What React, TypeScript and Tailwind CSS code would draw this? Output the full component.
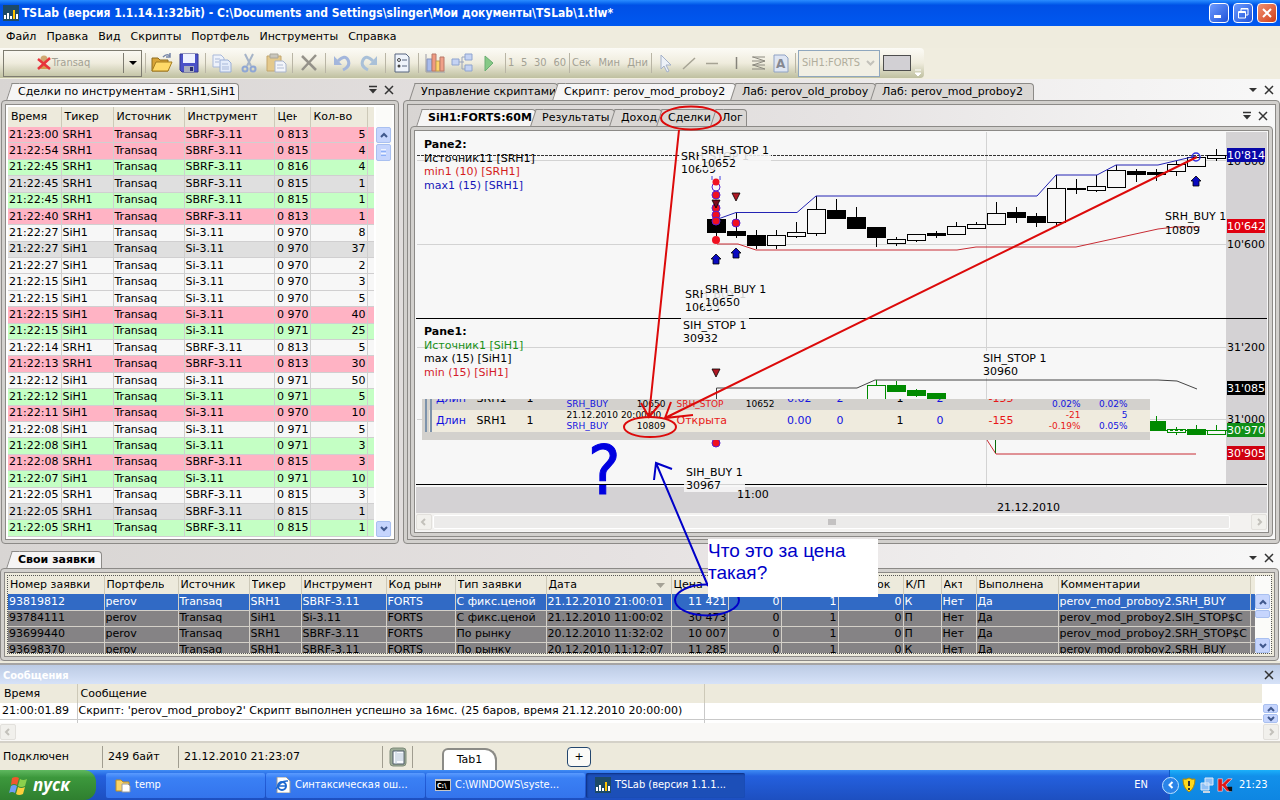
import type { ReactNode } from 'react';
import clsx from 'clsx';

type Tone = 'sell' | 'buy' | 'gray' | 'plain';

interface Deal {
  time: string;
  ticker: 'SRH1' | 'SiH1';
  price: string;
  qty: number;
  tone: Tone;
}

const deal = (time: string, ticker: Deal['ticker'], price: string, qty: number, tone: Tone): Deal => ({
  time, ticker, price, qty, tone,
});

const deals: Deal[] = [
  deal('21:23:00', 'SRH1', '0 813', 5, 'sell'),
  deal('21:22:54', 'SRH1', '0 815', 4, 'sell'),
  deal('21:22:45', 'SRH1', '0 816', 4, 'buy'),
  deal('21:22:45', 'SRH1', '0 815', 1, 'gray'),
  deal('21:22:45', 'SRH1', '0 815', 1, 'buy'),
  deal('21:22:40', 'SRH1', '0 813', 1, 'sell'),
  deal('21:22:27', 'SiH1', '0 970', 8, 'plain'),
  deal('21:22:27', 'SiH1', '0 970', 37, 'gray'),
  deal('21:22:27', 'SiH1', '0 970', 2, 'plain'),
  deal('21:22:15', 'SiH1', '0 970', 3, 'plain'),
  deal('21:22:15', 'SiH1', '0 970', 5, 'plain'),
  deal('21:22:15', 'SiH1', '0 970', 40, 'sell'),
  deal('21:22:15', 'SiH1', '0 971', 25, 'buy'),
  deal('21:22:14', 'SRH1', '0 813', 5, 'plain'),
  deal('21:22:13', 'SRH1', '0 813', 30, 'sell'),
  deal('21:22:12', 'SiH1', '0 971', 50, 'plain'),
  deal('21:22:12', 'SiH1', '0 971', 5, 'buy'),
  deal('21:22:11', 'SiH1', '0 970', 10, 'sell'),
  deal('21:22:08', 'SiH1', '0 971', 5, 'plain'),
  deal('21:22:08', 'SiH1', '0 971', 3, 'buy'),
  deal('21:22:08', 'SRH1', '0 815', 3, 'sell'),
  deal('21:22:07', 'SiH1', '0 971', 10, 'buy'),
  deal('21:22:05', 'SRH1', '0 815', 3, 'plain'),
  deal('21:22:05', 'SRH1', '0 815', 1, 'gray'),
  deal('21:22:05', 'SRH1', '0 815', 1, 'buy'),
];

const toneClass: Record<Tone, string> = {
  sell: 'bg-[#ffb3c4]',
  buy: 'bg-[#c4ffc4]',
  gray: 'bg-[#dfdfdf]',
  plain: 'bg-[#f7f7f7]',
};

const orders = [
  ['93819812', 'perov', 'Transaq', 'SRH1', 'SBRF-3.11', 'FORTS', 'С фикс.ценой', '21.12.2010 21:00:01', '11 421', '0', '1', '0', 'К', 'Нет', 'Да', 'perov_mod_proboy2.SRH_BUY'],
  ['93784111', 'perov', 'Transaq', 'SiH1', 'Si-3.11', 'FORTS', 'С фикс.ценой', '21.12.2010 11:00:02', '30 473', '0', '1', '0', 'П', 'Нет', 'Да', 'perov_mod_proboy2.SIH_STOP$C'],
  ['93699440', 'perov', 'Transaq', 'SRH1', 'SBRF-3.11', 'FORTS', 'По рынку', '20.12.2010 11:32:02', '10 007', '0', '1', '0', 'П', 'Нет', 'Да', 'perov_mod_proboy2.SRH_STOP$C'],
  ['93698370', 'perov', 'Transaq', 'SRH1', 'SBRF-3.11', 'FORTS', 'По рынку', '20.12.2010 11:12:07', '11 285', '0', '1', '0', 'К', 'Нет', 'Да', 'perov_mod_proboy2.SRH_BUY'],
];

const orderColumns = [
  { title: 'Номер заявки', width: 'w-[96px]' },
  { title: 'Портфель', width: 'w-[74px]' },
  { title: 'Источник', width: 'w-[71px]' },
  { title: 'Тикер', width: 'w-[52px]' },
  { title: 'Инструмент', width: 'w-[85px]' },
  { title: 'Код рынка', width: 'w-[69px]' },
  { title: 'Тип заявки', width: 'w-[91px]' },
  { title: 'Дата', width: 'w-[125px]' },
  { title: 'Цена', width: 'w-[57px]' },
  { title: '', width: 'w-[53px]' },
  { title: '', width: 'w-[57px]' },
  { title: 'Остаток', width: 'w-[65px]' },
  { title: 'К/П', width: 'w-[38px]' },
  { title: 'Акт', width: 'w-[35px]' },
  { title: 'Выполнена', width: 'w-[82px]' },
  { title: 'Комментарии', width: '' },
];

// y values of one bar: body top, body bottom, high, low
interface Candle {
  x: number;
  top: number;
  bottom: number;
  high: number;
  low: number;
  filled: boolean;
}

const bar = (x: number, top: number, bottom: number, high: number, low: number, filled = false): Candle => ({
  x, top, bottom, high, low, filled,
});

const sberCandles: Candle[] = [
  bar(716, 219, 232, 219, 236, true),
  bar(736, 231, 235, 213, 238, true),
  bar(756, 235, 245, 230, 249, true),
  bar(776, 235, 245, 230, 249),
  bar(796, 232, 236, 222, 238),
  bar(816, 209, 233, 196, 236),
  bar(836, 210, 218, 199, 219, true),
  bar(856, 217, 228, 207, 229, true),
  bar(876, 227, 237, 227, 247, true),
  bar(896, 239, 243, 237, 246),
  bar(916, 234, 240, 234, 242),
  bar(936, 233, 235, 231, 238, true),
  bar(956, 226, 234, 222, 234),
  bar(976, 224, 228, 222, 229),
  bar(996, 213, 224, 202, 224),
  bar(1016, 212, 217, 207, 223, true),
  bar(1036, 216, 222, 213, 227, true),
  bar(1056, 188, 222, 175, 226),
  bar(1076, 188, 189, 179, 194, true),
  bar(1096, 186, 190, 175, 192),
  bar(1116, 170, 187, 165, 188),
  bar(1136, 171, 174, 169, 182, true),
  bar(1156, 172, 174, 169, 181, true),
  bar(1176, 164, 171, 161, 176),
  bar(1196, 157, 166, 157, 166),
  bar(1216, 155, 158, 149, 161),
];

const siCandles: Candle[] = [
  bar(876, 385, 402, 380, 402),
  bar(896, 385, 391, 381, 391, true),
  bar(916, 390, 395, 389, 397, true),
  bar(936, 393, 399, 393, 399, true),
  bar(1156, 421, 430, 416, 430, true),
  bar(1176, 429, 432, 427, 435),
  bar(1196, 429, 434, 425, 435, true),
  bar(1216, 430, 434, 425, 434),
];

function CaretDown({ bar: withBar = false }: { bar?: boolean }) {
  return (
    <svg width="10" height="10" viewBox="0 0 10 10" aria-hidden>
      {withBar && <path d="M1 1.5h8" stroke="#333" strokeWidth="1.5" />}
      <path d={withBar ? 'M1 4h8L5 8.500z' : 'M1 3h8L5 7z'} fill="#333" />
    </svg>
  );
}

function CloseMark() {
  return (
    <svg width="10" height="10" viewBox="0 0 10 10" aria-hidden>
      <path d="M1 1l8 8M9 1l-8 8" stroke="#333" strokeWidth="1.500" />
    </svg>
  );
}

function PanelButtons({ pin = false }: { pin?: boolean }) {
  return (
    <div className="ml-auto flex items-center gap-[6px] self-center">
      <button aria-label="Меню панели"><CaretDown bar={pin} /></button>
      <button aria-label="Закрыть панель"><CloseMark /></button>
    </div>
  );
}

interface TabProps {
  children: ReactNode;
  width: string;
  active?: boolean;
  bold?: boolean;
}

function Tab({ children, width, active, bold }: TabProps) {
  return (
    <button
      className={clsx(
        'relative h-[17px] rounded-tr-sm border-t border-r border-[#8c8a87] pl-[6px] text-left whitespace-nowrap',
        'before:absolute before:-top-px before:bottom-0 before:-left-[3px] before:w-2 before:-skew-x-[18deg] before:border-t before:border-l before:border-[#8c8a87]',
        active ? 'bg-[#f6f5f5] before:bg-[#f6f5f5]' : 'bg-[#dad7d4] before:bg-[#dad7d4]',
        bold && 'font-bold',
        width,
      )}
    >
      <span className="relative">{children}</span>
    </button>
  );
}

function Frame({ children, className }: { children: ReactNode; className?: string }) {
  return (
    <div className="flex min-h-0 flex-1 flex-col rounded-sm border border-[#8c8a87] bg-[#d2d0cd] p-[3px]">
      <div className={clsx('flex min-h-0 flex-1 flex-col border border-[#8c8a87]', className)}>{children}</div>
    </div>
  );
}

function ScrollArrow({ dir, className, muted }: { dir: 'up' | 'down' | 'left' | 'right'; className: string; muted?: boolean }) {
  const paths = { up: 'M1 6l3-3 3 3', down: 'M1 2l3 3 3-3', left: 'M5 1L2 4l3 3', right: 'M3 1l3 3-3 3' };
  return (
    <button
      aria-label={dir}
      className={clsx(
        'flex shrink-0 items-center justify-center rounded-xs border',
        muted ? 'border-[#e2e0dc] bg-[#f1f0ec]' : 'border-[#a9c0f0] bg-[#c6d5fd]',
        className,
      )}
    >
      <svg width="8" height="8" viewBox="0 0 8 8" aria-hidden>
        <path d={paths[dir]} fill="none" stroke={muted ? '#c3c1bb' : '#40588c'} strokeWidth="2" />
      </svg>
    </button>
  );
}

function TitleBar() {
  return (
    <header className="flex h-[26px] items-center bg-linear-to-b from-[#2a8cff] via-[#0050e6] via-20% to-[#0058f0] px-[3px]">
      <AppIcon />
      <h1 className="ml-[3px] flex-1 font-['DejaVu_Sans_Condensed','DejaVu_Sans',sans-serif] text-[12px] font-bold whitespace-nowrap text-white">
        TSLab (версия 1.1.14.1:32bit) - C:\Documents and Settings\slinger\Мои документы\TSLab\1.tlw*
      </h1>
      <div className="flex gap-1">
        <button aria-label="Свернуть" className="flex size-5 items-end rounded-sm border border-white bg-linear-to-br from-[#6e9bff] to-[#1f50d8] p-1">
          <span className="h-[3px] w-[7px] bg-white" />
        </button>
        <button aria-label="Восстановить" className="flex size-5 items-center justify-center rounded-sm border border-white bg-linear-to-br from-[#6e9bff] to-[#1f50d8]">
          <svg width="12" height="12" viewBox="0 0 12 12" fill="none" stroke="#fff" aria-hidden>
            <path d="M4 4V1.500h7V8H8.500M4 2h7" />
            <path d="M1.500 4.500h7v6.500h-7zM1 5.500h8" />
          </svg>
        </button>
        <button aria-label="Закрыть" className="flex size-5 items-center justify-center rounded-sm border border-white bg-linear-to-br from-[#f09070] to-[#d03c10]">
          <svg width="12" height="12" viewBox="0 0 12 12" aria-hidden>
            <path d="M2 2l8 8M10 2l-8 8" stroke="#fff" strokeWidth="2" />
          </svg>
        </button>
      </div>
    </header>
  );
}

function AppIcon() {
  return (
    <svg width="16" height="16" viewBox="0 0 16 16" aria-hidden>
      <path fill="#1d4a66" d="M0 0h16v16H0z" />
      <path fill="#fff" d="M1 10h2v4H1zM4 8h2v6H4zM7 11h2v3H7zM13 9h2v5h-2z" />
      <path fill="#ffc400" d="M10 5h2v9h-2z" />
    </svg>
  );
}

const menu = ['Файл', 'Правка', 'Вид', 'Скрипты', 'Портфель', 'Инструменты', 'Справка'];

function Tool({ label, children, narrow }: { label: string; children: ReactNode; narrow?: boolean }) {
  return (
    <button
      aria-label={label}
      className={clsx('flex h-[27px] shrink-0 items-center justify-center', narrow ? 'w-[23px]' : 'w-[27px]')}
    >
      <svg width="22" height="22" viewBox="0 0 22 22" fill="none" aria-hidden>{children}</svg>
    </button>
  );
}

function Sep() {
  return <span className="mr-[2px] ml-[3px] h-5 w-px shrink-0 bg-[#b9b5a5]" />;
}

function Toolbar() {
  return (
    <div className="flex h-[31px] items-start bg-[#f0eddf]">
      <div className="flex h-[30px] items-center rounded-r-sm bg-linear-to-b from-[#fcfbf6] via-[#efecdd] to-[#bfc0a0] pl-[3px] text-[11px] text-[#a3a194]">
        <div className="flex h-[27px] w-[139px] shrink-0 items-center border border-[#7e7c70]">
          <button className="flex h-5 w-[120px] items-center justify-center gap-px border-r border-[#7e7c70] font-['DejaVu_Sans_Condensed','DejaVu_Sans',sans-serif]">
            <svg width="14" height="16" viewBox="0 0 14 16" aria-hidden>
              <circle cx="7" cy="4" r="3.500" fill="#d0a870" />
              <path d="M3 14q4-9 8 0z" fill="#d69a50" />
              <path d="M1 4l12 10M13 3L1 14" stroke="#e8343c" strokeWidth="2.500" />
            </svg>
            Transaq
          </button>
          <button aria-label="Выбор источника" className="flex flex-1 justify-center">
            <svg width="10" height="6" viewBox="0 0 10 6" aria-hidden><path d="M1 1h8L5 5z" fill="#000" /></svg>
          </button>
        </div>
        <Sep />
        <Tool label="Открыть">
          <path d="M1 6h6l2 2h8v11H1z" fill="#d9a437" stroke="#8f6d1e" />
          <path d="M1 19L5 10h16l-4 9z" fill="#ffd968" stroke="#a47c1f" />
          <path d="M12 5q4-4 7-1m0-3v4h-4" stroke="#7585a8" strokeWidth="1.500" />
        </Tool>
        <Tool label="Сохранить">
          <path d="M2 2h18v18H4l-2-2z" fill="#4a50c8" stroke="#33388f" />
          <path d="M5 2h12v9H5z" fill="#eef1ff" />
          <path d="M6 14h10v6H6z" fill="#a9adbc" />
          <path d="M12 15h3v4h-3z" fill="#282c70" />
        </Tool>
        <Sep />
        <Tool label="Копировать">
          <path d="M2 3h8l3 3v9H2z" fill="#eef2fa" stroke="#a9b9da" />
          <path d="M9 8h8l3 3v9H9z" fill="#e4ecfa" stroke="#9aaed6" />
          <path d="M4 7h5M4 10h4M11 12h6M11 15h7M11 17h7" stroke="#a9b9da" />
        </Tool>
        <Tool label="Вырезать">
          <path d="M7 2l6 12M15 2L9 14" stroke="#a6b4c8" strokeWidth="2" />
          <circle cx="7" cy="17" r="2.500" stroke="#8ea6d4" strokeWidth="2" />
          <circle cx="15" cy="17" r="2.500" stroke="#8ea6d4" strokeWidth="2" />
        </Tool>
        <Tool label="Вставить">
          <path d="M2 4h14v15H2z" fill="#e4c98c" stroke="#c3a66c" />
          <path d="M5 2h8v4H5z" fill="#c9c6bc" stroke="#aaa79a" />
          <path d="M10 9h8l3 3v8H10z" fill="#f3f5fa" stroke="#a9b4cc" />
          <path d="M12 13h6M12 16h7" stroke="#b4bfd6" />
        </Tool>
        <Sep />
        <Tool label="Удалить">
          <path d="M4 4l14 14M18 3L4 18" stroke="#95928a" strokeWidth="2.500" />
        </Tool>
        <Sep />
        <Tool label="Отменить">
          <path d="M7 9q7-7 10-1t-5 10" stroke="#a3b6dc" strokeWidth="3" />
          <path d="M3 4v9h8z" fill="#a3b6dc" />
        </Tool>
        <Tool label="Повторить">
          <path d="M15 9q-7-7-10-1t5 10" stroke="#a9c0d8" strokeWidth="3" />
          <path d="M19 4v9h-8z" fill="#a9c0d8" />
        </Tool>
        <Sep />
        <Tool label="Свойства">
          <path d="M4 2h11l3 3v15H4z" fill="#eef3fa" stroke="#56657f" />
          <circle cx="8" cy="8" r="1.500" stroke="#444" />
          <circle cx="8" cy="14" r="1.500" fill="#444" />
          <path d="M11 8h5M11 14h5" stroke="#56657f" />
        </Tool>
        <Sep />
        <Tool label="График">
          <path d="M2 2v18h19" stroke="#9a9aa5" />
          <path d="M3 7h5v12H3z" fill="#a9bcec" stroke="#8391bb" />
          <path d="M8 2h4v17H8z" fill="#f09a80" stroke="#b77868" />
          <path d="M12 9h4v10h-4z" fill="#ffd46a" stroke="#c2a050" />
          <path d="M16 5h4v14h-4z" fill="#f0a088" stroke="#b77868" />
        </Tool>
        <Tool label="Схема">
          <path d="M8 10h5M11 5v12M11 5h3M11 17h3" stroke="#98a3bb" />
          <path d="M1 7h7v6H1zM14 2h7v6h-7zM14 13h7v6h-7z" fill="#c5d3f3" stroke="#8fa4cf" />
        </Tool>
        <Tool label="Запуск">
          <path d="M7 4l8 7-8 8z" fill="#86c986" stroke="#6aae72" />
        </Tool>
        <Sep />
        <div className="flex w-[58px] shrink-0 justify-between font-['DejaVu_Sans_Condensed','DejaVu_Sans',sans-serif]">
          <button>1</button>
          <button>5</button>
          <button>30</button>
          <button>60</button>
        </div>
        <Sep />
        <div className="flex w-[76px] shrink-0 justify-between font-['DejaVu_Sans_Condensed','DejaVu_Sans',sans-serif]">
          <button>Сек</button>
          <button>Мин</button>
          <button>Дни</button>
        </div>
        <Sep />
        <Tool label="Указатель" narrow>
          <path d="M6 3v14l3-3 3 6 2-1-3-6h5z" fill="#edf1f7" stroke="#a4b1c9" />
        </Tool>
        <Tool label="Линия" narrow><path d="M5 17L17 6" stroke="#a6a394" strokeWidth="1.500" /></Tool>
        <Tool label="Горизонталь" narrow><path d="M5 11.500h12" stroke="#a6a394" strokeWidth="1.500" /></Tool>
        <Tool label="Вертикаль" narrow><path d="M12.500 5v12" stroke="#85837a" strokeWidth="1.500" /></Tool>
        <Tool label="Уровни" narrow>
          <path d="M5 5h13M5 9h13M5 13h13M5 17h13M6 5l12 4-12 4 12 4" stroke="#8c8a80" />
        </Tool>
        <Tool label="Текст" narrow>
          <path d="M4 3h11l3 3v14H4z" fill="#dee5f2" stroke="#8fa2c4" />
          <text x="6" y="16" fontSize="12" fontWeight="bold" fill="#858891">A</text>
        </Tool>
        <Sep />
        <button className="flex h-[27px] w-[82px] shrink-0 items-center justify-between border border-[#8fa7be] bg-[#f1efe4] pr-1 pl-[3px] font-['DejaVu_Sans_Condensed','DejaVu_Sans',sans-serif] whitespace-nowrap text-[#b0ad9c]">
          SiH1:FORTS
          <svg width="9" height="6" viewBox="0 0 9 6" fill="none" aria-hidden><path d="M1 1l3.500 3.500L8 1" stroke="#c3c2ba" strokeWidth="2" /></svg>
        </button>
        <button aria-label="Цвет" className="mx-[3px] h-4 w-7 border border-[#4e4e4e] bg-[#d2d0d4]" />
        <span className="w-[10px] self-end pb-px">
          <svg width="8" height="8" viewBox="0 0 8 8" aria-hidden><path d="M1 1h6M1 4h6L4 7z" fill="#fff" stroke="#fff" /></svg>
        </span>
      </div>
    </div>
  );
}

function DealsPanel() {
  return (
    <section className="ml-px flex w-[398px] shrink-0 flex-col">
      <div className="flex h-[21px] items-end pr-[5px] pl-[11px]">
        <Tab width="w-[227px]" active>Сделки по инструментам - SRH1,SiH1</Tab>
        <PanelButtons pin />
      </div>
      <Frame className="bg-white p-[2px]">
        <div className="flex flex-1">
          <table className="h-full w-[366px] table-fixed border-collapse">
            <thead>
              <tr className="h-5 bg-[#edeadc] text-left">
                <th className="w-[53px] pl-[3px] font-normal">Время</th>
                <th className="w-[52px] border-l border-[#cdc9b8] pl-[3px] font-normal">Тикер</th>
                <th className="w-[71px] border-l border-[#cdc9b8] pl-[3px] font-normal">Источник</th>
                <th className="w-[90px] border-l border-[#cdc9b8] pl-[3px] font-normal">Инструмент</th>
                <th className="w-[36px] overflow-hidden border-x border-[#cdc9b8] pl-[3px] font-normal"><span className="block w-[19px] overflow-hidden">Цена</span></th>
                <th className="w-[57px] border-r border-[#cdc9b8] pl-[3px] font-normal">Кол-во</th>
                <th aria-label="Пусто" />
              </tr>
            </thead>
            <tbody>
              {deals.map((row, i) => (
                <tr key={i} className={clsx('border-b border-[#d0cfd0] whitespace-nowrap', toneClass[row.tone])}>
                  <td className="overflow-hidden pl-px">{row.time}</td>
                  <td className="border-l border-[#cfcfcf] pl-px">{row.ticker}</td>
                  <td className="border-l border-[#cfcfcf] pl-px">Transaq</td>
                  <td className="border-l border-[#cfcfcf] pl-px">{row.ticker === 'SRH1' ? 'SBRF-3.11' : 'Si-3.11'}</td>
                  <td className="border-l border-[#cfcfcf] pr-px text-right">{row.price}</td>
                  <td className="border-x border-[#cfcfcf] pr-px text-right">{row.qty}</td>
                  <td />
                </tr>
              ))}
            </tbody>
          </table>
          <div className="ml-[2px] flex flex-1 flex-col bg-[#fbfbf9] pt-5">
            <ScrollArrow dir="up" className="h-4 w-[15px]" />
            <div className="mt-px flex h-[17px] w-[15px] flex-col justify-center gap-px rounded-xs border border-[#a9c0f0] bg-[#c6d5fd] px-1">
              <span className="h-px bg-[#eef4fe]" />
              <span className="h-px bg-[#8cb0f8]" />
              <span className="h-px bg-[#eef4fe]" />
              <span className="h-px bg-[#8cb0f8]" />
            </div>
            <ScrollArrow dir="down" className="mt-auto h-4 w-[15px]" />
          </div>
        </div>
      </Frame>
    </section>
  );
}

function Candles({ data, color }: { data: Candle[]; color: string }) {
  return (
    <g stroke={color}>
      {data.map(c => (
        <g key={c.x}>
          <path d={`M${c.x} ${c.high}V${c.low}`} />
          <rect x={c.x - 9} y={c.top} width={18} height={c.bottom - c.top} fill={c.filled ? color : '#f7f7f7'} />
        </g>
      ))}
    </g>
  );
}

interface MarkProps {
  x: number;
  y: number;
  name: string;
  price: string;
  w?: number;
}

function TradeLabel({ x, y, name, price, w = 68 }: MarkProps) {
  return (
    <g>
      <rect x={x - 2} y={y - 11} width={w} height={27} fill="#f7f7f7" fillOpacity={0.85} />
      <text x={x} y={y}>{name}</text>
      <text x={x} y={y + 13}>{price}</text>
    </g>
  );
}

function PriceTag({ y, value, fill }: { y: number; value: string; fill: string }) {
  return (
    <g>
      <rect x={1227} y={y - 7} width={38} height={14} fill={fill} />
      <text x={1227} y={y + 4} fill="#fff">{value}</text>
    </g>
  );
}

const upArrow = (x: number, y: number) => `M${x} ${y - 5}l5 5h-2v5h-6v-5h-2z`;
const downArrow = (x: number, y: number) => `M${x - 4} ${y - 4}h8l-4 8z`;

function Chart() {
  return (
    <svg viewBox="416 132 851 381" className="block h-auto w-full text-[11px]" shapeRendering="crispEdges">
      <rect x="416" y="132" width="851" height="381" fill="#f7f7f7" />
      <rect x="1226" y="132" width="41" height="353" fill="#d4d2d4" />
      <rect x="416" y="487" width="851" height="26" fill="#d4d2d4" />
      <path d="M417 160.500h810M417 244.500h810M417 347.500h810M417 419.500h810M986.500 132v355" stroke="#d3d3d3" />
      <path d="M417 155.500h810" stroke="#333" strokeDasharray="3 1" />
      <path d="M416 318.500h851M416 484.500h851" stroke="#000" />

      <g fontWeight="bold">
        <text x="424" y="148">Pane2:</text>
        <text x="424" y="335">Pane1:</text>
      </g>
      <text x="424" y="162">Источник11 [SRH1]</text>
      <text x="424" y="175" fill="#d41c1c">min1 (10) [SRH1]</text>
      <text x="424" y="189" fill="#1616b8">max1 (15) [SRH1]</text>
      <text x="424" y="349" fill="#189018">Источник1 [SiH1]</text>
      <text x="424" y="362">max (15) [SiH1]</text>
      <text x="424" y="376" fill="#d41c2c">min (15) [SiH1]</text>

      <Candles data={sberCandles} color="#000" />
      <g fill="none" shapeRendering="auto">
        <path d="M718 219l18-6.500h61l19-16.500h221l19-21h41l19-10h42l38-9" stroke="#2424b4" />
        <path d="M717 244h21l18 6h201l19-3h100l82-18 17-2h25" stroke="#c82c34" />
        <path d="M716.500 400v-12H857l18-8h283l19 1 20 8" stroke="#444" />
        <path d="M987 440l9 14h200" stroke="#c82c34" />
        <path d="M995.500 438v15" stroke="#0a6a0a" />
      </g>
      <Candles data={siCandles} color="#008a00" />
      <path d="M1150 430.500h77" stroke="#008a00" strokeDasharray="3 2" />

      <TradeLabel x={681} y={160} name="SRH_STOP 1" price="10609" />
      <TradeLabel x={701} y={154} name="SRH_STOP 1" price="10652" w={72} />
      <TradeLabel x={685} y={298} name="SRH_BUY 1" price="10653" />
      <TradeLabel x={705} y={293} name="SRH_BUY 1" price="10650" />
      <TradeLabel x={683} y={329} name="SIH_STOP 1" price="30932" />
      <TradeLabel x={686} y={476} name="SIH_BUY 1" price="30967" w={61} />
      <TradeLabel x={983} y={362} name="SIH_STOP 1" price="30960" />
      <text x="1165" y="220">SRH_BUY 1</text>
      <text x="1165" y="234">10809</text>

      <g shapeRendering="auto">
        <path d="M712 176v4M720 176v4" stroke="#4040e0" />
        <g fill="#f01020" stroke="#5a20d0">
          <circle cx="716" cy="187" r="4" fill="#f7f7f7" />
          <circle cx="716" cy="182" r="3.500" stroke="none" />
          <circle cx="716" cy="195" r="4" />
          <circle cx="716" cy="208" r="4" />
          <circle cx="716" cy="215" r="4" />
          <circle cx="716" cy="221" r="4" />
          <circle cx="736" cy="223" r="4" />
          <circle cx="716" cy="443" r="4" />
          <circle cx="716" cy="240" r="4" stroke="none" />
          <circle cx="1196" cy="157" r="4" fill="none" stroke="#3030e0" strokeWidth="1.500" />
        </g>
        <g stroke="#000" strokeWidth="0.800">
          <path d={downArrow(716, 204)} fill="#7c0c20" />
          <path d={downArrow(736, 197)} fill="#b01824" />
          <path d={downArrow(716, 373)} fill="#b01824" />
          <path d={upArrow(716, 259)} fill="#0a0ac0" />
          <path d={upArrow(736, 253)} fill="#0a0ac0" />
          <path d={upArrow(1196, 181)} fill="#0a0ac0" />
        </g>
      </g>

      <text x="1227" y="165">10'800</text>
      <text x="1227" y="248">10'600</text>
      <text x="1227" y="351">31'200</text>
      <text x="1227" y="423">31'000</text>
      <PriceTag y={155} value="10'814" fill="#0808a8" />
      <PriceTag y={226} value="10'642" fill="#e00010" />
      <PriceTag y={388} value="31'085" fill="#000" />
      <PriceTag y={430} value="30'970" fill="#109018" />
      <PriceTag y={453} value="30'905" fill="#d00010" />
      <text x="737" y="498">11:00</text>
      <text x="997" y="511">21.12.2010</text>
    </svg>
  );
}

interface TradeRow {
  date: string;
  entry: string;
  exit: ReactNode;
  exitPrice: string;
  cells: string[];
  profit: [string, string];
  profitPct: [string, string];
}

const tradeRows: TradeRow[] = [
  { date: '', entry: '10650', exit: <span className="text-[9px]">SRH_STOP</span>, exitPrice: '10652', cells: ['0.02', '2', '1', '2', '-155'], profit: ['', '0.02%'], profitPct: ['', '0.02%'] },
  { date: '21.12.2010 20:00:00', entry: '10809', exit: 'Открыта', exitPrice: '', cells: ['0.00', '0', '1', '0', '-155'], profit: ['-21', '-0.19%'], profitPct: ['5', '0.05%'] },
];

// fragment of the trade list, floating over the chart
function TradeStrip() {
  return (
    <div className="absolute top-[267px] left-[6px] flex h-[41px] w-[728px] flex-col justify-end overflow-hidden bg-[#d3d1cd] pb-2">
      <table className="ml-[3px] w-[725px] shrink-0 table-fixed border-collapse border-l-[7px] border-double border-[#7d93ab] whitespace-nowrap text-[#1212e0]">
        <tbody>
          {tradeRows.map((row, i) => (
            <tr key={i} className={clsx('h-[22px]', i === 0 ? 'bg-[#d3d1cd]' : 'bg-[#efebde]')}>
              <td className="w-[48px] pl-1">Длин</td>
              <td className="w-[50px] text-black">SRH1</td>
              <td className="w-[40px] text-black">1</td>
              <td className="w-[99px] text-[9px] leading-[11px]">
                <div className="h-[11px] text-black">{row.date}</div>
                <div className="flex justify-between">
                  <span>SRH_BUY</span>
                  <span className="text-black">{row.entry}</span>
                </div>
              </td>
              <td className={clsx('w-[60px] pl-[11px] text-[#e81818]', i === 0 && 'align-bottom leading-[11px]')}>{row.exit}</td>
              <td className="w-[49px] text-right align-bottom text-[9px] leading-[11px] text-black">{row.exitPrice}</td>
              <td className="w-[37px] text-right">{row.cells[0]}</td>
              <td className="w-[32px] text-right">{row.cells[1]}</td>
              <td className="w-[60px] text-right text-black">{row.cells[2]}</td>
              <td className="w-[40px] text-right">{row.cells[3]}</td>
              <td className="w-[70px] text-right text-[#e81818]">{row.cells[4]}</td>
              <td className={clsx('w-[67px] text-right text-[9px] leading-[11px]', i === 1 && 'text-[#e81818]')}>
                <div className="h-[11px]">{row.profit[0]}</div>
                <div>{row.profit[1]}</div>
              </td>
              <td className="w-[47px] text-right text-[9px] leading-[11px]">
                <div className="h-[11px]">{row.profitPct[0]}</div>
                <div>{row.profitPct[1]}</div>
              </td>
              <td />
            </tr>
          ))}
        </tbody>
      </table>
    </div>
  );
}

function ScriptPanel() {
  return (
    <section className="ml-1 flex min-w-0 flex-1 flex-col">
      <div className="flex h-[21px] items-end pr-[6px] pl-[12px]">
        <Tab width="w-[143px]">Управление скриптами</Tab>
        <Tab width="w-[178px]" active>Скрипт: perov_mod_proboy2</Tab>
        <Tab width="w-[140px]">Лаб: perov_old_proboy</Tab>
        <Tab width="w-[158px]">Лаб: perov_mod_proboy2</Tab>
        <PanelButtons />
      </div>
      <Frame className="bg-linear-to-r from-[#d8d5d3] via-[#e6e3e3] to-[#f8f8f8] p-[2px] pt-0">
        <div className="flex h-[21px] items-end pr-[5px] pl-[12px]">
          <Tab width="w-[114px]" active bold>SiH1:FORTS:60M</Tab>
          <Tab width="w-[79px]">Результаты</Tab>
          <Tab width="w-[47px]">Доход</Tab>
          <Tab width="w-[54px]">Сделки</Tab>
          <Tab width="w-[31px]">Лог</Tab>
          <PanelButtons pin />
        </div>
        <Frame className="bg-[#f7f7f7] p-px">
          <div className="relative">
            <Chart />
            <TradeStrip />
          </div>
          <div className="flex flex-1 items-center bg-[#f3f2f0]">
            <ScrollArrow dir="left" muted className="h-4 w-4" />
            <div className="mx-px flex h-[14px] flex-1 items-center justify-center rounded-xs border border-white bg-[#ecebea]">
              <span className="h-[6px] w-2 bg-[#c4c2c2]" />
            </div>
            <ScrollArrow dir="right" muted className="ml-5 h-4 w-4" />
          </div>
        </Frame>
      </Frame>
    </section>
  );
}

function OrdersPanel() {
  return (
    <section className="flex h-[114px] flex-col pr-px">
      <div className="flex h-[21px] items-end pr-[5px] pl-[12px]">
        <Tab width="w-[90px]" active bold>Свои заявки</Tab>
        <PanelButtons />
      </div>
      <Frame className="bg-[#edeadc] p-[2px]">
        <div className="flex min-h-0 flex-1 border border-dotted border-[#555]">
          <div className="min-w-0 flex-1 overflow-hidden">
            <table className="w-full table-fixed border-collapse whitespace-nowrap">
              <thead>
                <tr className="h-[18px] bg-[#edeadc] text-left">
                  {orderColumns.map((col, i) => (
                    <th key={i} className={clsx('overflow-hidden border-r border-[#cdc9b8] pl-[2px] font-normal', col.width)}>
                      {i === 7 ? (
                        <span className="flex items-center justify-between pr-[6px]">
                          {col.title}
                          <svg width="9" height="5" viewBox="0 0 9 5" aria-hidden><path d="M0 0h9L4.500 5z" fill="#a5a296" /></svg>
                        </span>
                      ) : (
                        <span className={clsx('block overflow-hidden', i === 11 ? 'pr-3 text-right' : 'mr-[14px]')}>{col.title}</span>
                      )}
                    </th>
                  ))}
                  <th className="w-[5px]" aria-label="Пусто" />
                </tr>
              </thead>
              <tbody>
                {orders.map((row, r) => (
                  <tr
                    key={row[0]}
                    className={clsx('h-4 border-b border-[#d4d0c8]', r === 0 ? 'bg-[#316ac5] text-white' : 'bg-[#858385] text-black')}
                  >
                    {row.map((value, i) => (
                      <td
                        key={i}
                        className={clsx('overflow-hidden border-r border-[#d4d0c8]', i >= 8 && i <= 11 ? 'pr-px text-right' : 'pl-px')}
                      >
                        {value}
                      </td>
                    ))}
                    <td />
                  </tr>
                ))}
              </tbody>
            </table>
          </div>
          <div className="flex w-4 flex-col bg-[#fbfbf9] pt-[18px]">
            <ScrollArrow dir="up" className="h-[15px] w-[15px]" />
            <div className="mt-px h-2 w-[15px] rounded-xs border border-[#a9c0f0] bg-[#c6d5fd]" />
            <ScrollArrow dir="down" className="mt-auto h-[15px] w-[15px]" />
          </div>
        </div>
      </Frame>
    </section>
  );
}

function MessagesPanel() {
  return (
    <section className="mt-[2px] flex h-[80px] flex-col border-y-2 border-t-[#a5a4a4] border-b-[#d4d1c8] bg-white">
      <div className="flex h-[19px] shrink-0 items-center bg-linear-to-b from-[#bccbe4] to-[#d6e2f8] pr-[6px] pl-[3px] font-['DejaVu_Sans_Condensed','DejaVu_Sans',sans-serif] font-bold text-white">
        <span className="pt-[2px]">Сообщения</span>
        <button aria-label="Закрыть сообщения" className="ml-auto"><CloseMark /></button>
      </div>
      <div className="flex h-[39px] shrink-0 items-start overflow-hidden">
        <table className="flex-1 table-fixed border-collapse whitespace-nowrap">
          <thead>
            <tr className="h-[19px] bg-[#edeadc] text-left">
              <th className="w-[77px] border-r border-[#cdc9b8] pl-[4px] font-normal">Время</th>
              <th className="w-[627px] border-r border-[#cdc9b8] pl-[3px] font-normal">Сообщение</th>
              <th aria-label="Пусто" />
            </tr>
          </thead>
          <tbody>
            <tr className="h-4 border-b border-[#c9c9c9]">
              <td className="border-r border-[#c9c9c9] pl-[2px]">21:00:01.89</td>
              <td className="border-r border-[#c9c9c9] pl-px">Скрипт: 'perov_mod_proboy2' Скрипт выполнен успешно за 16мс. (25 баров, время 21.12.2010 20:00:00)</td>
              <td />
            </tr>
            <tr className="h-4">
              <td className="border-r border-[#c9c9c9]" />
              <td className="border-r border-[#c9c9c9]" />
              <td />
            </tr>
          </tbody>
        </table>
        <div className="flex h-[39px] w-[18px] flex-col justify-end gap-px pl-px">
          <ScrollArrow dir="up" className="h-[9px] w-[15px]" />
          <ScrollArrow dir="down" className="h-[9px] w-[15px]" />
        </div>
      </div>
      <div className="flex flex-1 items-center justify-between bg-[#f9f8f6] pr-px">
        <ScrollArrow dir="left" muted className="h-4 w-4" />
        <ScrollArrow dir="right" muted className="h-4 w-4" />
      </div>
    </section>
  );
}

function StatusBar() {
  return (
    <footer className="flex h-[27px] items-center bg-[#edeadc]">
      <span className="w-[102px] pl-[3px]">Подключен</span>
      <span className="flex h-[22px] w-[76px] items-center border-l border-[#a09d90] pl-[5px]">249 байт</span>
      <span className="flex h-[22px] w-[204px] items-center border-l border-[#a09d90] pl-[5px]">21.12.2010 21:23:07</span>
      <span className="flex h-[22px] w-[31px] items-center justify-center border-x border-[#a09d90]">
        <svg width="18" height="20" viewBox="0 0 18 20" aria-hidden>
          <rect x="1" y="1" width="16" height="18" rx="3" fill="#9cab97" stroke="#7e8c7a" />
          <path d="M4 4h11v13H4z" fill="#f8fbff" stroke="#4d5a66" />
          <path d="M7 4v13M8 7h6M8 9h6M8 11h6M8 13h6" stroke="#b4c4d4" />
        </svg>
      </span>
      <button className="ml-[29px] h-[22px] w-[55px] self-end rounded-tl-md rounded-tr-xl border-2 border-b-0 border-[#8b8b86] bg-white">Tab1</button>
      <button className="ml-[70px] flex h-5 w-6 items-center justify-center rounded-sm border border-[#23466e] bg-[#fafaf7]">+</button>
    </footer>
  );
}

function Task({ icon, children, active }: { icon: ReactNode; children: ReactNode; active?: boolean }) {
  return (
    <button
      className={clsx(
        'flex h-[25px] w-[159px] items-center gap-1 rounded-xs pl-[9px] text-white',
        active ? 'bg-[#1c4fb8] shadow-[inset_1px_1px_2px_#0c2f80]' : 'bg-linear-to-b from-[#5a9bff] via-[#3a80f5] via-20% to-[#3474ec]',
      )}
    >
      {icon}
      {children}
    </button>
  );
}

function Taskbar() {
  return (
    <nav className="flex h-[30px] items-center bg-linear-to-b from-[#3f8cf5] via-[#2460de] via-20% to-[#1d4fc0] font-['DejaVu_Sans_Condensed','DejaVu_Sans',sans-serif] text-[11px] text-white">
      <button className="mr-[10px] flex h-[30px] w-24 items-center gap-1 rounded-r-xl bg-linear-to-b from-[#5fb85f] via-[#3c983c] via-25% to-[#2f7f2f] pl-[9px] font-['Open_Sans','DejaVu_Sans',sans-serif] text-[17px] font-bold italic">
        <svg width="20" height="20" viewBox="0 0 20 20" aria-hidden>
          <path d="M3 3q4-2 7 0l-2 7q-3-2-6 0z" fill="#f0572c" />
          <path d="M11 4q3 2 7 0l-2 7q-4 2-7 0z" fill="#8bd04c" />
          <path d="M2 11q3-2 6 0l-2 7q-3-2-6 0z" fill="#6f9df5" />
          <path d="M9 12q3 2 7 0l-2 7q-4 2-7 0z" fill="#fccf3c" />
        </svg>
        пуск
      </button>
      <div className="flex gap-px">
        <Task icon={
          <svg width="16" height="16" viewBox="0 0 16 16" aria-hidden>
            <path d="M1 3h5l2 2h6v9H1z" fill="#f8d468" stroke="#b98d24" />
            <path d="M7 7h6l2 2v6H7z" fill="#fff" stroke="#9a9a9a" />
          </svg>
        }>temp</Task>
        <Task icon={
          <svg width="16" height="16" viewBox="0 0 16 16" aria-hidden>
            <path d="M2 0h9l4 4v12H2z" fill="#fff" stroke="#999" />
            <circle cx="7" cy="9" r="4" fill="none" stroke="#1c68d0" strokeWidth="2" />
            <path d="M3 9h8M1 12Q6 3 13 4" stroke="#1c68d0" strokeWidth="1.500" fill="none" />
          </svg>
        }>Синтаксическая ош...</Task>
        <Task icon={
          <svg width="16" height="12" viewBox="0 0 16 12" aria-hidden>
            <path d="M0 0h16v12H0z" fill="#c8c8c8" />
            <path d="M1 2h14v9H1z" fill="#000" />
            <text x="2" y="9" fontSize="7" fontWeight="bold" fill="#fff">C:\</text>
          </svg>
        }>C:\WINDOWS\syste...</Task>
        <Task active icon={<AppIcon />}>TSLab (версия 1.1.1...</Task>
      </div>
      <span className="ml-auto pr-[21px]">EN</span>
      <div className="flex h-[30px] w-[111px] items-center gap-[2px] border-l border-[#0c5cc8] bg-linear-to-b from-[#1cb0fa] via-[#1290ea] via-20% to-[#0e86e2]">
        <button aria-label="Показать значки" className="-ml-2 flex size-[17px] items-center justify-center rounded-full border border-[#bfe2ff] bg-[#2a84e8]">
          <svg width="8" height="8" viewBox="0 0 8 8" fill="none" aria-hidden><path d="M5.500 1l-3 3 3 3" stroke="#fff" strokeWidth="2" /></svg>
        </button>
        <svg width="16" height="16" viewBox="0 0 16 16" aria-hidden>
          <path d="M8 1q3 2 6 1 0 9-6 13Q2 11 2 2q3 1 6-1z" fill="#ffd91c" stroke="#b18a00" />
          <path d="M8 4v5M8 11v2" stroke="#333" strokeWidth="2" />
        </svg>
        <svg width="16" height="16" viewBox="0 0 16 16" aria-hidden>
          <path d="M6 1h8v7H6zM2 6h8v7H2z" fill="#8fc0f5" stroke="#e0ecf8" />
          <path d="M4 15h7" stroke="#c8d6e4" strokeWidth="2" />
        </svg>
        <svg width="16" height="16" viewBox="0 0 18 16" aria-hidden>
          <path d="M1 1h5v6l6-6h5l-7 7 6 7h-5L6 9v6H1z" fill="#e01818" stroke="#fff" strokeWidth="0.600" />
          <path d="M11 10h6v5h-3z" fill="#111" />
        </svg>
        <time className="ml-1">21:23</time>
      </div>
    </nav>
  );
}

function Annotations() {
  return (
    <>
      <svg width="1280" height="800" viewBox="0 0 1280 800" fill="none" className="pointer-events-none absolute top-0 left-0">
        <g stroke="#dc0a0a" strokeWidth="2">
          <ellipse cx="691" cy="118" rx="30" ry="11.500" />
          <path d="M679 130L649 416M641 403l8 14 11-13" />
          <path d="M1197 157L665 418M671 402l-6 16 28-3" />
          <ellipse cx="650" cy="427" rx="26" ry="10" />
        </g>
        <g stroke="#0000c8" strokeWidth="2">
          <ellipse cx="707" cy="600" rx="32" ry="15.500" />
          <path d="M708 586L656 463M654 480l2-17 16 6" />
        </g>
        <text x="588" y="494" fontSize="68" fill="#0000e0" stroke="#0000e0" fontFamily="DejaVu Sans Condensed, DejaVu Sans, sans-serif">?</text>
      </svg>
      <p className="absolute top-[539px] left-[708px] h-[58px] w-[170px] bg-white pt-px font-['Liberation_Sans',sans-serif] text-[19px] leading-[22px] text-[#0000c8]">
        Что это за цена<br />такая?
      </p>
    </>
  );
}

export default function App() {
  return (
    <div className="relative flex min-h-screen flex-col overflow-hidden bg-[#edeadc] font-['DejaVu_Sans',sans-serif] text-[11px] leading-[14px] text-black">
      <TitleBar />
      <nav className="flex h-[22px] items-center gap-[10px] bg-[#efecde] pl-[6px]">
        {menu.map(item => <button key={item}>{item}</button>)}
      </nav>
      <Toolbar />
      <main className="flex flex-1 flex-col">
        <div className="flex flex-1 bg-linear-to-r from-[#d8d5d3] via-[#e6e2e2] to-[#f8f8f8] pb-[3px]">
          <DealsPanel />
          <ScriptPanel />
        </div>
        <div className="bg-linear-to-r from-[#d8d5d3] via-[#e6e2e2] to-[#f8f8f8]">
          <OrdersPanel />
        </div>
        <MessagesPanel />
      </main>
      <StatusBar />
      <Taskbar />
      <Annotations />
    </div>
  );
}
